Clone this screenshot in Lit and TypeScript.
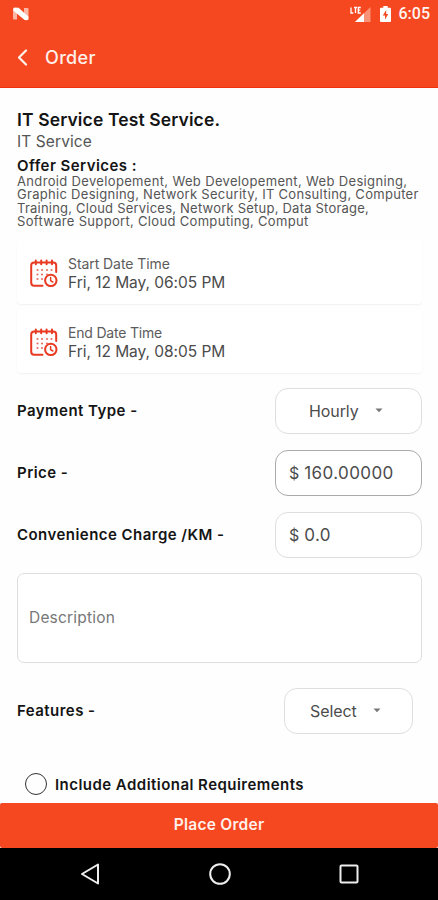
import { LitElement, html, css, svg } from "lit";
import { customElement } from "lit/decorators.js";

@customElement("calendar-clock-icon")
class CalendarClockIcon extends LitElement {
  static styles = css`
    :host { display: block; width: 28px; height: 29px; }
    svg { display: block; }
  `;
  render() {
    const dots = [
      [7.5, 11], [12, 11], [17, 11], [21.5, 11],
      [7.5, 15.5], [12, 15.5], [17, 15.5],
      [7.5, 20], [12, 20],
    ];
    return html`<svg width="28" height="29" viewBox="0 0 28 29" fill="none" stroke="#e83a22" stroke-width="2" stroke-linecap="round">
      <path d="M26.2 13V6.5Q26.2 3.6 23.2 3.6H4.2Q1.2 3.6 1.2 6.5V23.5Q1.2 26.8 4.2 26.8H12.5" />
      <path d="M5.8 1.6V5.2M11.2 1.6V5.2M16.6 1.6V5.2M22 1.6V5.2" />
      <circle cx="20.8" cy="21.4" r="5.7" />
      <path d="M20.6 18.6V21.6L22.8 23" stroke-width="1.5" />
      ${dots.map(([x, y]) => svg`<circle cx=${x} cy=${y} r="1.1" fill="#ea7064" stroke="none" />`)}
    </svg>`;
  }
}

@customElement("app-root")
class AppRoot extends LitElement {
  static styles = css`
    :host {
      display: flex;
      flex-direction: column;
      width: 438px;
      height: 900px;
      overflow: hidden;
      background: #fefefe;
      color: #141414;
      font-family: Inter, "Liberation Sans", sans-serif;
      white-space: nowrap;
    }
    * { box-sizing: border-box; }
    svg { display: block; flex: none; }
    .header { height: 88px; background: #f54820; border-bottom: 1px solid #ee3311; color: #fff; flex: none; }
    .status { height: 28px; display: flex; align-items: center; padding: 0 8px 0 12px; }
    .spacer { flex: 1; }
    .signal { margin-right: 9px; }
    .clock { font: 500 16px/28px Roboto, sans-serif; margin-left: 8px; color: #fff4f0; }
    .bar { height: 58px; display: flex; align-items: center; padding-left: 17px; }
    .page-title { font-size: 18px; font-weight: 500; margin-left: 17px; letter-spacing: 0.35px; color: #fff0ea; }
    .content { flex: 1; min-height: 0; padding: 19px 16px 0 17px; display: flex; flex-direction: column; }
    .name { font-size: 17.5px; font-weight: 600; line-height: 25px; letter-spacing: 0.12px; }
    .kind { font-size: 15.5px; line-height: 19px; letter-spacing: 0.1px; color: #555; }
    .offer { font-size: 15px; font-weight: 600; line-height: 18px; margin-top: 6px; letter-spacing: 0.45px; }
    .services { font-size: 13px; line-height: 13.4px; color: #555; }
    .l { display: block; }
    .l1 { letter-spacing: 0.34px; }
    .l2 { letter-spacing: 0.29px; }
    .l3 { letter-spacing: 0.22px; }
    .l4 { letter-spacing: 0.32px; }
    .cards { margin-top: 12px; display: grid; gap: 6px; }
    .card {
      height: 63px; display: flex; align-items: center; padding: 3px 0 0 13px; gap: 10px;
      border-radius: 4px; background: #fff; box-shadow: 0 1px 2px rgba(0,0,0,.06);
    }
    .when-label { font-size: 14px; line-height: 18px; color: #5c5c5c; }
    .start { letter-spacing: -0.07px; }
    .end { letter-spacing: -0.2px; }
    .when { font-size: 15.5px; line-height: 19px; letter-spacing: -0.04px; color: #4b4b4b; }
    .row { display: flex; align-items: center; justify-content: space-between; height: 46px; }
    .label { font-size: 15px; font-weight: 600; letter-spacing: 0.46px; }
    .box { width: 147px; height: 46px; border: 1.5px solid #dedede; border-radius: 13px; display: flex; align-items: center; color: #4c4c4c; background: #fff; font-size: 16px; }
    .pay { margin-top: 15px; }
    .price { margin-top: 16px; }
    .charge { margin-top: 16px; }
    .select { padding-left: 33px; }
    .select svg { margin-left: 16px; }
    .select span { letter-spacing: -0.1px; }
    .money { padding-left: 13px; gap: 5px; font-size: 17px; }
    .currency { font-size: 16px; }
    .amount { letter-spacing: 0.4px; }
    .strong { border-color: #aaa; }
    .desc { margin-top: 15px; height: 90px; flex: none; border: 1.5px solid #dedede; border-radius: 7px; padding-left: 11px; display: flex; align-items: center; font-size: 15.5px; letter-spacing: 0.2px; color: #777; background: #fff; }
    .features { margin-top: 25px; padding-right: 9px; }
    .features .box { width: 129px; padding-left: 25px; }
    .include { display: flex; align-items: center; gap: 8px; margin: 39px 0 0 8px; height: 23px; }
    .radio { width: 22px; height: 22px; border: 1.5px solid #333; border-radius: 50%; }
    .place { height: 45px; flex: none; background: #f54820; border-radius: 2px; color: #fff0ea; display: flex; align-items: center; justify-content: center; font-size: 15.5px; font-weight: 600; letter-spacing: 0.27px; padding-bottom: 2px; }
    .nav { height: 52px; flex: none; background: #000; display: flex; align-items: center; justify-content: space-between; padding: 0 78px 0 79px; }
  `;

  private caret() {
    return html`<svg width="8" height="5" viewBox="0 0 8 5"><path d="M0.5 0.5H7.5L4 4.3Z" fill="#777" /></svg>`;
  }

  private card(label: string, value: string, c: string) {
    return html`<div class="card">
      <calendar-clock-icon></calendar-clock-icon>
      <div><div class="when-label ${c}">${label}</div><div class="when">${value}</div></div>
    </div>`;
  }

  render() {
    return html`
      <div class="header">
        <div class="status">
          <svg width="17" height="14" viewBox="0 0 17 14">
            <path d="M1 1.5Q1 .8 2 .8H5V12.5H2Q1 12.5 1 11.5Z" fill="#fbb7a4" />
            <path d="M12 1H15.5Q16.5 1 16.5 2V12.8H12Z" fill="#fbb7a4" />
            <path d="M2 .7H6.6L16.3 9.6V12.6Q14 14 11.4 12L1.2 3.6Z" fill="#fff" />
          </svg>
          <span class="spacer"></span>
          <svg class="signal" width="21" height="17" viewBox="0 0 21 17">
            <path d="M20.5 1V16H5Z" fill="#fa9277" />
            <path d="M14 7.3V16H5Z" fill="#fff" />
            <path d="M1 1.5V7H3.3M4 1.5H7M5.5 1.5V7M10.8 1.5H8.3V7H10.8M8.3 4.2H10.3" fill="none" stroke="#fff" stroke-width="1.3" />
          </svg>
          <svg width="11" height="16" viewBox="0 0 11 16">
            <path d="M3.3 0H7.7V1.8H10Q11 1.8 11 2.8V15Q11 16 10 16H1Q0 16 0 15V2.8Q0 1.8 1 1.8H3.3Z" fill="#fff" />
            <path d="M6.2 4L2.8 9.5H5V13.5L8.3 8H6.2Z" fill="#f54820" />
          </svg>
          <span class="clock">6:05</span>
        </div>
        <div class="bar">
          <svg width="11" height="17" viewBox="0 0 11 17"><path d="M9 1.5L2 8.5L9 15.5" fill="none" stroke="#fff0ea" stroke-width="2.2" stroke-linecap="round" stroke-linejoin="round" /></svg>
          <span class="page-title">Order</span>
        </div>
      </div>
      <div class="content">
        <div class="name">IT Service Test Service.</div>
        <div class="kind">IT Service</div>
        <div class="offer">Offer Services :</div>
        <div class="services">
          <span class="l l1">Android Developement, Web Developement, Web Designing,</span>
          <span class="l l2">Graphic Designing, Network Security, IT Consulting, Computer</span>
          <span class="l l3">Training, Cloud Services, Network Setup, Data Storage,</span>
          <span class="l l4">Software Support, Cloud Computing, Comput</span>
        </div>
        <div class="cards">
          ${this.card("Start Date Time", "Fri, 12 May, 06:05 PM", "start")}
          ${this.card("End Date Time", "Fri, 12 May, 08:05 PM", "end")}
        </div>
        <div class="row pay"><span class="label">Payment Type -</span><div class="box select"><span>Hourly</span>${this.caret()}</div></div>
        <div class="row price"><span class="label">Price -</span><div class="box money strong"><span class="currency">$</span><span class="amount">160.00000</span></div></div>
        <div class="row charge"><span class="label">Convenience Charge /KM -</span><div class="box money"><span class="currency">$</span><span class="amount">0.0</span></div></div>
        <div class="desc">Description</div>
        <div class="row features"><span class="label">Features -</span><div class="box select"><span>Select</span>${this.caret()}</div></div>
        <div class="include"><span class="radio"></span><span class="label">Include Additional Requirements</span></div>
      </div>
      <div class="place">Place Order</div>
      <div class="nav">
        <svg width="22" height="24" viewBox="0 0 22 24"><path d="M19 2.5V21.5L3 12Z" fill="none" stroke="#eee" stroke-width="2" stroke-linejoin="round" /></svg>
        <svg width="24" height="24" viewBox="0 0 24 24"><circle cx="12" cy="12" r="9.8" fill="none" stroke="#eee" stroke-width="2" /></svg>
        <svg width="22" height="22" viewBox="0 0 22 22"><rect x="2.5" y="2.5" width="17" height="17" rx="1" fill="none" stroke="#eee" stroke-width="2" /></svg>
      </div>
    `;
  }
}
